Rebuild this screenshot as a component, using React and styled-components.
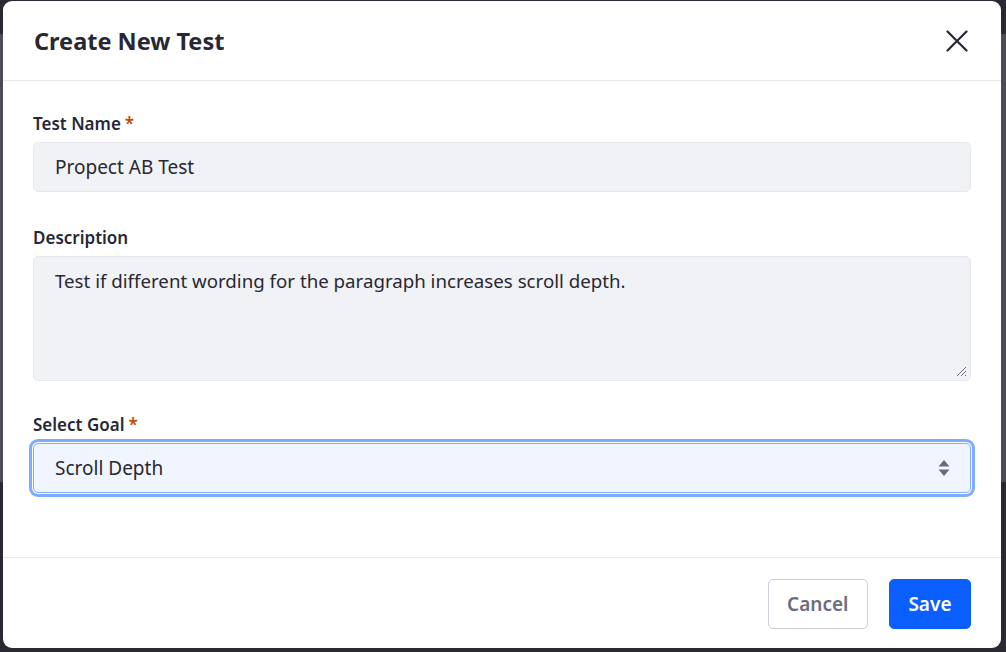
import React from 'react';
import styled, { createGlobalStyle } from 'styled-components';

const GlobalStyle = createGlobalStyle`
  html, body {
    margin: 0;
    padding: 0;
  }
  body {
    font-family: "Noto Sans", "Open Sans", sans-serif;
    background: linear-gradient(#2a2932 0, #2a2932 34px, #4d4c56 34px, #4d4c56 482px, #2a2932 482px);
    color: #272833;
  }
`;

const Backdrop = styled.div`
  width: 1006px;
  height: 652px;
  box-sizing: border-box;
  padding: 1px 5px 4px 3px;
  display: flex;
`;

const Modal = styled.div`
  flex: 1;
  background: #fff;
  border-radius: 9px;
  display: flex;
  flex-direction: column;
  overflow: hidden;
`;

const Header = styled.div`
  height: 79px;
  display: flex;
  align-items: center;
  justify-content: space-between;
  padding: 0 30px 0 31px;
  border-bottom: 1px solid #e7e7ed;
`;

const Title = styled.h1`
  margin: 0;
  font-size: 23.5px;
  font-weight: 700;
  color: #272833;
`;

const CloseButton = styled.button`
  border: 0;
  background: none;
  padding: 0;
  width: 28px;
  height: 28px;
  display: flex;
  align-items: center;
  justify-content: center;
  color: #272833;
  cursor: pointer;
`;

const Body = styled.div`
  flex: 1;
  padding: 32px 30px 0 30px;
`;

const Group = styled.div`
  margin-bottom: ${(p) => p.gap || 35}px;
`;

const Label = styled.label`
  display: block;
  font-size: 17px;
  font-weight: 600;
  line-height: 22px;
  margin-bottom: 7px;
  color: #272833;
`;

const Star = styled.span`
  color: #b95000;
  margin-left: 4px;
`;

const Field = styled.div`
  box-sizing: border-box;
  height: ${(p) => p.h || 50}px;
  background: ${(p) => (p.focus ? '#f0f5ff' : '#f1f2f5')};
  border: 1px solid ${(p) => (p.focus ? '#80acff' : '#e7e7ed')};
  border-radius: 5px;
  box-shadow: ${(p) => (p.focus ? '0 0 0 1px #fff, 0 0 0 4px #80acff' : 'none')};
  padding: ${(p) => (p.multi ? '11px 21px' : '0 20px 0 21px')};
  display: flex;
  align-items: ${(p) => (p.multi ? 'flex-start' : 'center')};
  justify-content: space-between;
  font-size: ${(p) => (p.multi ? 18.7 : 19)}px;
  color: #272833;
  position: relative;
`;

const Grip = styled.svg`
  position: absolute;
  right: 3px;
  bottom: 3px;
`;

const Footer = styled.div`
  height: 91px;
  box-sizing: border-box;
  border-top: 1px solid #e7e7ed;
  display: flex;
  align-items: center;
  justify-content: flex-end;
  gap: 21px;
  padding: 2px 30px 0 0;
`;

const Button = styled.button`
  box-sizing: border-box;
  height: 50px;
  padding: 0 ${(p) => (p.primary ? 18.5 : 18.5)}px;
  border-radius: 5px;
  font-family: inherit;
  font-size: 19px;
  font-weight: 600;
  border: 1px solid ${(p) => (p.primary ? '#0b5fff' : '#cdced9')};
  background: ${(p) => (p.primary ? '#0b5fff' : '#fff')};
  color: ${(p) => (p.primary ? '#fff' : '#6b6c7e')};
`;

export default function App() {
  return (
    <>
      <GlobalStyle />
      <Backdrop>
        <Modal>
          <Header>
            <Title>Create New Test</Title>
            <CloseButton aria-label="Close">
              <svg width="22" height="22" viewBox="0 0 22 22">
                <path d="M1.5 1.5 L20.5 20.5 M20.5 1.5 L1.5 20.5" stroke="#272833" strokeWidth="2.2" strokeLinecap="round" />
              </svg>
            </CloseButton>
          </Header>
          <Body>
            <Group gap={35}>
              <Label>Test Name<Star>*</Star></Label>
              <Field>Propect AB Test</Field>
            </Group>
            <Group gap={33}>
              <Label>Description</Label>
              <Field h={125} multi>
                Test if different wording for the paragraph increases scroll depth.
                <Grip width="11" height="11" viewBox="0 0 11 11">
                  <path d="M10 1 L1 10 M10 5 L5 10 M10 9 L9 10" stroke="#6b6c7e" strokeWidth="1" />
                </Grip>
              </Field>
            </Group>
            <Group>
              <Label>Select Goal<Star>*</Star></Label>
              <Field focus>
                Scroll Depth
                <svg width="12" height="18" viewBox="0 0 12 18">
                  <path d="M6 1 L11.5 7.5 L0.5 7.5 Z M6 17 L11.5 10.5 L0.5 10.5 Z" fill="#6b6c7e" />
                </svg>
              </Field>
            </Group>
          </Body>
          <Footer>
            <Button>Cancel</Button>
            <Button primary>Save</Button>
          </Footer>
        </Modal>
      </Backdrop>
    </>
  );
}
